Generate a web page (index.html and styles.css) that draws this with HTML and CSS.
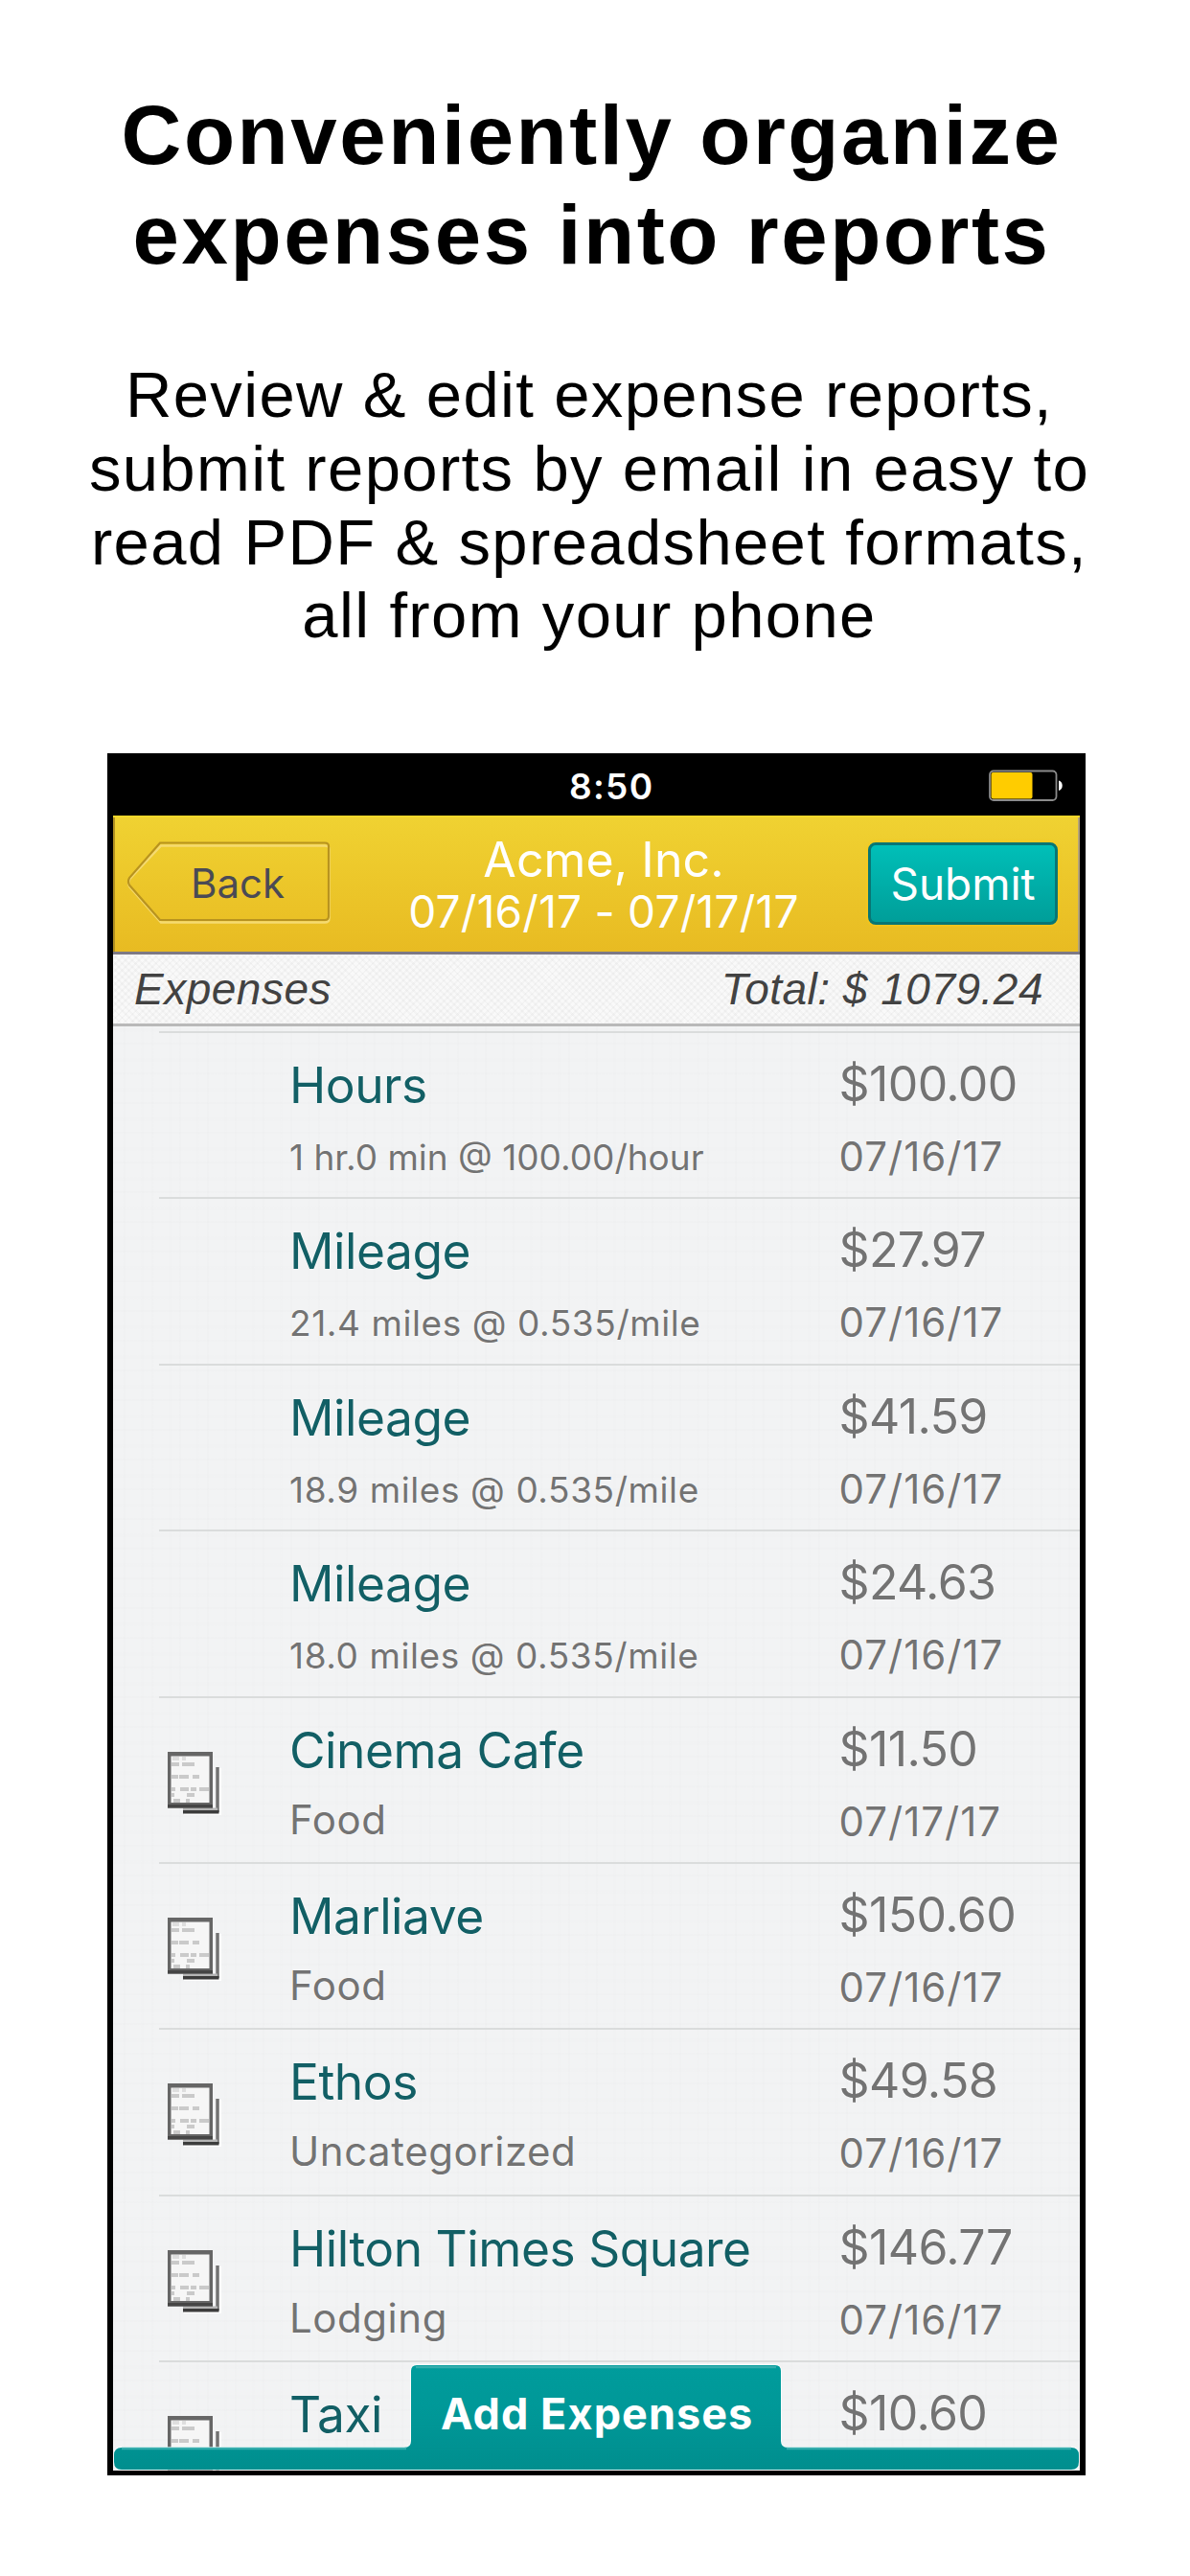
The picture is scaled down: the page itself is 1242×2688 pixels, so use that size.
FILE: index.html
```html
<!DOCTYPE html>
<html lang="en">
<head>
    <meta charset="UTF-8">
    <meta name="viewport" content="width=device-width, initial-scale=1.0">
    <title>Expense Reports</title>
    <link rel="stylesheet" href="styles.css">
</head>
<body>
    <h1>Conveniently organize<br>expenses into reports</h1>
    <p class="intro">Review &amp; edit expense reports,<br>submit reports by email in easy to<br>read PDF &amp; spreadsheet formats,<br>all from your phone</p>

    <!-- Shared receipt icon -->
    <svg class="defs" width="0" height="0">
        <symbol id="receipt" viewBox="0 0 56 68">
            <path d="M17 62.5h36.500V17" fill="none" stroke="#fff" stroke-width="7"/>
            <path d="M52 16v47" stroke="#727272" stroke-width="3.500"/>
            <path d="M16 60h36" stroke="#b5b5b5" stroke-width="3"/>
            <path d="M16 62.700h37.500" stroke="#3c3c3c" stroke-width="3.600"/>
            <rect x="0" y="0" width="47" height="58.500" fill="#666"/>
            <rect x="0" y="55" width="47" height="3.500" fill="#454545"/>
            <rect x="3.500" y="4.500" width="40" height="48.500" fill="#f6f6f6"/>
            <g stroke="#cacaca" stroke-width="4">
                <path d="M5 7h7M15 7h4" stroke="#dedede"/>
                <path d="M4 13h8M15 13h13"/>
                <path d="M4 26h7M12 26h10M26 26h7"/>
                <path d="M4 39h4M13 39h9M24 39h6M33 39h10"/>
                <path d="M4 45h3M20 45h8"/>
                <path d="M6 51h7M19 51h4"/>
            </g>
        </symbol>
    </svg>

    <div class="phone">
        <div class="status-bar">
            <span class="time">8:50</span>
            <svg class="battery" width="79" height="34" viewBox="0 0 79 34">
                <rect x="1" y="1.500" width="69.500" height="30.500" rx="4" fill="#000" stroke="#8b8b8b" stroke-width="1.800"/>
                <rect x="2.500" y="3" width="43" height="27.500" rx="2" fill="#ffcc00"/>
                <path d="M73 11.500c5 1 5 9.500 0 10.500z" fill="#fff"/>
            </svg>
        </div>

        <div class="nav-bar">
            <div class="back">
                <svg width="215" height="90" viewBox="0 0 215 90">
                    <path d="M36 5.500H207Q211.500 5.500 211.500 9V81Q211.500 85.500 207 85.500H36L3.500 48.500Q1 45 3.500 40Z" fill="none" stroke="#f5da70" stroke-width="2.500"/>
                    <path d="M35 2.500H207Q211 2.500 211 6V79Q211 83 207 83H35L3 46.500Q1 43 3 39Z" fill="none" stroke="#b8931f" stroke-width="2.200"/>
                </svg>
                <span>Back</span>
            </div>
            <div class="report">
                <div class="client">Acme, Inc.</div>
                <div class="period">07/16/17 - 07/17/17</div>
            </div>
            <button class="submit">Submit</button>
        </div>

        <div class="summary">
            <span>Expenses</span>
            <span>Total: $ 1079.24</span>
        </div>

        <div class="list">
            <div class="row">
                <div></div>
                <div><div class="name">Hours</div><div class="note hours">1 hr.0 min @ 100.00/hour</div></div>
                <div><div class="amount">$100.00</div><div class="date">07/16/17</div></div>
            </div>
            <div class="row">
                <div></div>
                <div><div class="name">Mileage</div><div class="note">21.4 miles @ 0.535/mile</div></div>
                <div><div class="amount">$27.97</div><div class="date">07/16/17</div></div>
            </div>
            <div class="row">
                <div></div>
                <div><div class="name">Mileage</div><div class="note">18.9 miles @ 0.535/mile</div></div>
                <div><div class="amount">$41.59</div><div class="date">07/16/17</div></div>
            </div>
            <div class="row">
                <div></div>
                <div><div class="name">Mileage</div><div class="note">18.0 miles @ 0.535/mile</div></div>
                <div><div class="amount">$24.63</div><div class="date">07/16/17</div></div>
            </div>
            <div class="row">
                <svg class="receipt"><use href="#receipt"/></svg>
                <div><div class="name">Cinema Cafe</div><div class="category">Food</div></div>
                <div><div class="amount">$11.50</div><div class="date">07/17/17</div></div>
            </div>
            <div class="row">
                <svg class="receipt"><use href="#receipt"/></svg>
                <div><div class="name">Marliave</div><div class="category">Food</div></div>
                <div><div class="amount">$150.60</div><div class="date">07/16/17</div></div>
            </div>
            <div class="row">
                <svg class="receipt"><use href="#receipt"/></svg>
                <div><div class="name">Ethos</div><div class="category">Uncategorized</div></div>
                <div><div class="amount">$49.58</div><div class="date">07/16/17</div></div>
            </div>
            <div class="row">
                <svg class="receipt"><use href="#receipt"/></svg>
                <div><div class="name">Hilton Times Square</div><div class="category">Lodging</div></div>
                <div><div class="amount">$146.77</div><div class="date">07/16/17</div></div>
            </div>
            <div class="row">
                <svg class="receipt"><use href="#receipt"/></svg>
                <div><div class="name">Taxi</div></div>
                <div><div class="amount">$10.60</div></div>
            </div>

            <!-- Tab sits over the bottom of the list -->
            <div class="add-bar">
                <svg width="1009" height="111" viewBox="0 0 1009 111">
                    <defs>
                        <linearGradient id="teal" x1="0" y1="0" x2="0" y2="1">
                            <stop offset="0" stop-color="#009c9c"/>
                            <stop offset="0.500" stop-color="#009797"/>
                            <stop offset="1" stop-color="#008e8e"/>
                        </linearGradient>
                    </defs>
                    <path d="M9 87H304Q311 87 311 80V7Q311 1 317 1H691Q697 1 697 7V80Q697 87 704 87H1000Q1008 87 1008 95V102Q1008 110 1000 110H9Q1 110 1 102V95Q1 87 9 87Z" fill="url(#teal)" stroke="#fff" stroke-opacity="0.700" stroke-width="2" paint-order="stroke"/>
                    <path d="M9 88H306M316 3H692M703 88H1000" stroke="#35adad" stroke-width="2.500"/>
                </svg>
                <span>Add Expenses</span>
            </div>
        </div>
    </div>
</body>
</html>
```
FILE: styles.css
```css
* {
    box-sizing: border-box;
}
body {
    margin: 0;
    width: 1242px;
    height: 2688px;
    padding-top: 89.2px;
    background: #fff;
    color: #000;
    font-family: "Liberation Sans", Arial, sans-serif;
    overflow: hidden;
}
h1 {
    margin: 0 7px 0 0;
    font-size: 87px;
    line-height: 103.8px;
    letter-spacing: 2.56px;
    text-align: center;
    white-space: nowrap;
}
.intro {
    margin: 77.6px 12px 105.2px 0;
    font-size: 67px;
    line-height: 76.6px;
    letter-spacing: 1.36px;
    text-align: center;
    white-space: nowrap;
}
.defs {
    position: absolute;
}

.phone {
    display: flex;
    flex-direction: column;
    width: 1021px;
    height: 1797px;
    margin-left: 112px;
    border: 6px solid #000;
    border-top: none;
    border-bottom-width: 5px;
    font-family: Inter, sans-serif;
    white-space: nowrap;
}
.status-bar {
    display: flex;
    height: 65px;
    background: #000;
}
.time {
    margin-left: 476px;
    width: 438px;
    font-size: 37px;
    font-weight: 600;
    line-height: 69px;
    letter-spacing: 1.3px;
    color: #fff;
}
.battery {
    margin-top: 17px;
}

.nav-bar {
    display: flex;
    height: 145px;
    padding-top: 26px;
    background: linear-gradient(#f0d232, #e8bb22);
    border-bottom: 3px solid #7d7984;
    box-shadow: inset 0 2px #f6d72b, inset 2px 0 #b08f22, inset -2px 0 #b3a37a;
}
.back {
    position: relative;
    width: 213px;
    height: 87px;
    margin-left: 14px;
}
.back span {
    position: absolute;
    left: 67px;
    top: 1px;
    font-size: 42px;
    line-height: 88px;
    color: #4a4a55;
}
.report {
    width: 490px;
    margin: -14px 0 0 22px;
    padding-left: 36px;
    color: #fff;
    text-align: center;
}
.client {
    font-size: 50px;
    line-height: 68px;
    letter-spacing: 0.1px;
}
.period {
    font-size: 46px;
    line-height: 40px;
    letter-spacing: 0.23px;
}
.submit {
    width: 198px;
    height: 86px;
    margin: 2px 0 0 49px;
    padding: 0;
    border: 3px solid #087674;
    border-radius: 8px;
    background: linear-gradient(#00bfb8, #009e99);
    box-shadow: 0 0 3px 1px #fcc917;
    font-family: inherit;
    font-size: 46px;
    letter-spacing: -0.1px;
    color: #fff;
}

.summary {
    display: flex;
    justify-content: space-between;
    height: 75px;
    padding: 4px 38px 0 22px;
    background-color: #f9f9f9;
    background-image:
        repeating-linear-gradient(45deg, rgba(0, 0, 0, 0.025) 0 2px, transparent 2px 5px),
        repeating-linear-gradient(-45deg, rgba(0, 0, 0, 0.025) 0 2px, transparent 2px 5px);
    border-bottom: 3px solid #b9b9b9;
    font-family: "Liberation Sans", Arial, sans-serif;
    font-size: 46px;
    font-style: italic;
    line-height: 64px;
    letter-spacing: 0.5px;
    color: #424242;
    text-shadow: 0 1px #fff;
}

/* faint linen weave */
.list {
    position: relative;
    flex: 1;
    padding-top: 5px;
    overflow: hidden;
    background-color: #f2f3f4;
    background-image:
        repeating-linear-gradient(90deg, rgba(0, 0, 0, 0.005) 0 3px, transparent 3px 11px, rgba(0, 0, 0, 0.007) 11px 13px, transparent 13px 29px),
        repeating-linear-gradient(0deg, rgba(0, 0, 0, 0.007) 0 2px, transparent 2px 13px, rgba(0, 0, 0, 0.005) 13px 17px, transparent 17px 31px);
}
.row {
    display: grid;
    grid-template-columns: 136px 573.5px 1fr;
    height: 173.4px;
    margin-left: 48px;
    padding-top: 24px;
    border-top: 2px solid #dadcdc;
    color: #737373;
    text-shadow: 0 0 2px #fff;
}
.name {
    font-size: 51.5px;
    line-height: 60px;
    letter-spacing: -0.5px;
    color: #125f65;
}
.note {
    font-size: 37px;
    line-height: 91px;
    letter-spacing: 0.58px;
}
.note.hours {
    letter-spacing: 0;
}
.category {
    font-size: 42px;
    line-height: 86px;
    letter-spacing: 0.55px;
}
.amount {
    font-size: 50px;
    line-height: 59px;
    letter-spacing: -0.6px;
}
.date {
    font-size: 42px;
    line-height: 91px;
    letter-spacing: 1.02px;
}
.receipt {
    width: 56px;
    height: 68px;
    margin: 32px 0 0 9px;
}

.add-bar {
    position: absolute;
    left: 0;
    bottom: 0;
    width: 1009px;
    height: 111px;
}
.add-bar svg {
    display: block;
}
.add-bar span {
    position: absolute;
    left: 342px;
    top: 0;
    font-size: 45px;
    font-weight: bold;
    line-height: 104px;
    letter-spacing: 1.04px;
    color: #fff;
}
```
